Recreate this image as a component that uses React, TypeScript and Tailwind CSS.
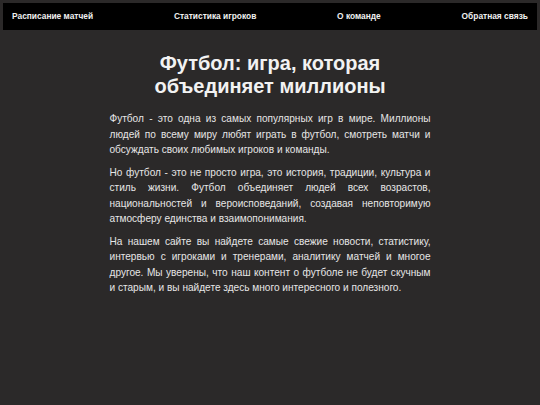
import React from "react";

export default function App() {
  const links = ["Расписание матчей", "Статистика игроков", "О команде", "Обратная связь"];
  return (
    <div className="min-h-[405px] w-full bg-[#2b2929] pt-[3px] font-['Liberation_Sans',Arial,sans-serif]">
      <nav className="mx-[3px] flex h-[27px] items-center justify-between bg-black px-[9px]">
        {links.map((l) => (
          <span key={l} className="text-[8.4px] font-bold text-[#f0f0f0]">
            {l}
          </span>
        ))}
      </nav>
      <main className="mx-auto w-[321px] pt-[22px]">
        <h1 className="text-center text-[20px] font-bold leading-[23px] text-[#f2f2f2]">
          Футбол: игра, которая объединяет миллионы
        </h1>
        <div className="mt-[13px] flex flex-col gap-[7px] text-justify text-[10.1px] leading-[15.5px] text-[#e6e6e6]">
          <p>
            Футбол - это одна из самых популярных игр в мире. Миллионы людей по всему миру любят играть в футбол, смотреть матчи и обсуждать своих любимых игроков и команды.
          </p>
          <p>
            Но футбол - это не просто игра, это история, традиции, культура и стиль жизни. Футбол объединяет людей всех возрастов, национальностей и вероисповеданий, создавая неповторимую атмосферу единства и взаимопонимания.
          </p>
          <p>
            На нашем сайте вы найдете самые свежие новости, статистику, интервью с игроками и тренерами, аналитику матчей и многое другое. Мы уверены, что наш контент о футболе не будет скучным и старым, и вы найдете здесь много интересного и полезного.
          </p>
        </div>
      </main>
    </div>
  );
}
